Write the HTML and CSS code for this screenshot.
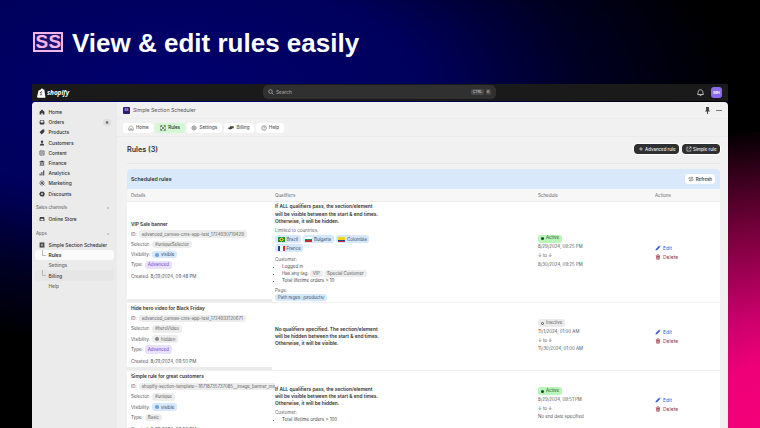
FILE: index.html
```html
<!DOCTYPE html>
<html lang="en">
<head>
  <meta charset="UTF-8">
  <title>View &amp; edit rules easily</title>
  <link rel="stylesheet" href="styles.css">
</head>
<body>
  <!-- icon sprite -->
  <svg width="0" height="0" class="defs">
    <symbol id="pencil" viewBox="0 0 12 12"><path d="M1 11l.6-3L8 1.600 10.400 4 4 10.400zM8.800.8l.6-.4 2.200 2.200-.4.6z" fill="currentColor"/></symbol>
    <symbol id="trash" viewBox="0 0 12 12"><path d="M4.500 1h3l.5 1h2.500v1.200h-9V2H4zM2.500 4h7l-.5 7H3zM4.600 5.200v4.600h.8V5.200zm2 0v4.600h.8V5.200z" fill="currentColor"/></symbol>
    <symbol id="i-home" viewBox="0 0 10 10"><path d="M5 1l4 3.500V9H6V6.500H4V9H1V4.500z" fill="currentColor"/></symbol>
    <symbol id="i-orders" viewBox="0 0 10 10"><path d="M2 1.500h6L9 4v3.500L8 9H2L1 7.500V4zM2.200 5.500h1.800l.5 1h1l.5-1h1.800L7.300 2.700H2.700z" fill="currentColor" fill-rule="evenodd"/></symbol>
    <symbol id="i-products" viewBox="0 0 10 10"><path d="M5.500 1H9v3.500L4.500 9 1 5.500z" fill="currentColor"/></symbol>
    <symbol id="i-customers" viewBox="0 0 10 10"><circle cx="5" cy="3" r="2" fill="currentColor"/><path d="M1.500 9c0-2.300 1.500-3.200 3.500-3.200S8.500 6.700 8.500 9z" fill="currentColor"/></symbol>
    <symbol id="i-content" viewBox="0 0 10 10"><path d="M1.500 1.500h7v7h-7zM2.500 3.500h5M2.500 5.500l2 1 1-1 2 1" fill="none" stroke="currentColor"/></symbol>
    <symbol id="i-finance" viewBox="0 0 10 10"><path d="M5 1l4 2v1H1V3zM1 8h8v1H1zM2 5h1.300v2.500H2zM4.300 5h1.400v2.500H4.300zM6.700 5H8v2.500H6.700z" fill="currentColor"/></symbol>
    <symbol id="i-analytics" viewBox="0 0 10 10"><path d="M1 6h1.700v3H1zM4 3.500h1.700V9H4zM7 1h1.700v8H7z" fill="currentColor"/></symbol>
    <symbol id="i-marketing" viewBox="0 0 10 10"><circle cx="5" cy="5" r="3.500" fill="none" stroke="currentColor"/><circle cx="5" cy="5" r="1.500" fill="currentColor"/><path d="M5 5l4 4" stroke="currentColor"/></symbol>
    <symbol id="i-discounts" viewBox="0 0 10 10"><path d="M5 .6l1.300 1 1.600-.2.400 1.500 1.400.9L9 5.300l.6 1.500-1.400.8-.4 1.500-1.600-.1L5 9.400 3.700 8.500 2.100 8.600l-.4-1.500L.4 6.300 1 5 .4 3.600l1.300-.8.4-1.500 1.600.2zM5 3.500a1.500 1.500 0 100 3 1.500 1.500 0 000-3z" fill="currentColor" fill-rule="evenodd"/></symbol>
    <symbol id="i-store" viewBox="0 0 10 10"><path d="M1.500 1.500h7L9 4v4.500H1V4zM2.500 4.500v3h5v-3z" fill="currentColor" fill-rule="evenodd"/></symbol>
    <symbol id="i-app" viewBox="0 0 10 10"><path d="M1 1h8v8H1zM3 3v1.500h1.500V3zm2.500 0v1.500H7V3zM3 5.500V7h1.500V5.500zm2.500 0V7H7V5.500z" fill="currentColor" fill-rule="evenodd"/></symbol>
    <symbol id="t-home" viewBox="0 0 10 10"><path d="M5 1.200l3.600 3.200v4.400H6V6.300H4v2.500H1.400V4.400z" fill="none" stroke="currentColor" stroke-width=".8"/></symbol>
    <symbol id="t-rules" viewBox="0 0 10 10"><path d="M1.500 1.500l7 7M8.500 1.500l-7 7M1 4V1h3M6 9h3V6M1 6v3h3M9 4V1H6" fill="none" stroke="currentColor"/></symbol>
    <symbol id="t-settings" viewBox="0 0 10 10"><circle cx="5" cy="5" r="1.400" fill="none" stroke="currentColor" stroke-width=".8"/><circle cx="5" cy="5" r="3.200" fill="none" stroke="currentColor" stroke-width=".8"/><path d="M5 .6v1M5 8.400v1M.6 5h1M8.400 5h1M1.900 1.900l.7.7M7.400 7.400l.7.7M8.100 1.900l-.7.7M2.600 7.400l-.7.7" stroke="currentColor" stroke-width=".8"/></symbol>
    <symbol id="t-billing" viewBox="0 0 10 10"><path d="M3 2h6.500v3.500H3zM.5 4H7v2.500H4V8H2.500V6.500H.5z" fill="currentColor"/></symbol>
    <symbol id="t-help" viewBox="0 0 10 10"><circle cx="5" cy="5" r="3.900" fill="none" stroke="currentColor" stroke-width=".8"/><path d="M3.800 4c.1-1.500 2.500-1.400 2.500 0 0 1-1.300 1-1.300 2M5 6.800v.8" fill="none" stroke="currentColor" stroke-width=".8"/></symbol>
    <symbol id="b-plus" viewBox="0 0 10 10"><path d="M5 2v6M2 5h6" fill="none" stroke="currentColor" stroke-width="1.100"/></symbol>
    <symbol id="b-ext" viewBox="0 0 10 10"><path d="M4 2H1.500v6.500H8V6M5.500 1.500h3v3M8.500 1.500L4.500 5.500" fill="none" stroke="currentColor"/></symbol>
    <symbol id="b-refresh" viewBox="0 0 10 10"><path d="M1.500 4.500V3h6M6 1.300L7.700 3 6 4.700M8.500 5.500V7h-6M4 5.300L2.300 7 4 8.700" fill="none" stroke="currentColor" stroke-width=".9"/></symbol>
  </svg>

  <div class="headline">
    <div class="logo"><span>S</span><span>S</span></div>
    <h1>View &amp; edit rules easily</h1>
  </div>

  <div class="window">
    <div class="topbar">
      <div class="brand">
        <svg width="9" height="10" viewBox="0 0 9 10"><path d="M1.500 2.500L3.500 1.800C4 .4 5.500 .2 6 1.400L7.300 1.500 8.500 9.800 1 9.800 0 9z" fill="#fff"/><path d="M5 3.800c-1.500-.4-2.200 1-.8 1.700 1 .6.500 1.900-1 1.300" stroke="#1a1a1a" stroke-width=".8" fill="none"/></svg>
        <span>shopify</span>
      </div>
      <div class="search">
        <svg width="6" height="6" viewBox="0 0 6 6"><circle cx="2.500" cy="2.500" r="1.800" fill="none" stroke="#bbb" stroke-width=".7"/><path d="M4 4l1.500 1.500" stroke="#bbb" stroke-width=".7"/></svg>
        <span class="search-text">Search</span>
        <span class="kbd">CTRL</span><span class="kbd">K</span>
      </div>
      <div class="top-right">
        <svg width="7" height="8" viewBox="0 0 7 8"><path d="M3.500.8c-1.500 0-2.300 1-2.300 2.400 0 1.300-.7 1.800-.7 2.300h6c0-.5-.7-1-.7-2.300C5.800 1.800 5 .8 3.500.8z" fill="none" stroke="#ddd" stroke-width=".8"/><path d="M2.700 6.600h1.600" stroke="#ddd" stroke-width=".8"/></svg>
        <div class="avatar">MH</div>
      </div>
    </div>

    <div class="panes">
      <nav class="sidebar">
        <a class="nav-item"><svg class="ico"><use href="#i-home"/></svg>Home</a>
        <a class="nav-item"><svg class="ico"><use href="#i-orders"/></svg>Orders<b class="count">6</b></a>
        <a class="nav-item"><svg class="ico"><use href="#i-products"/></svg>Products</a>
        <a class="nav-item"><svg class="ico"><use href="#i-customers"/></svg>Customers</a>
        <a class="nav-item"><svg class="ico"><use href="#i-content"/></svg>Content</a>
        <a class="nav-item"><svg class="ico"><use href="#i-finance"/></svg>Finance</a>
        <a class="nav-item"><svg class="ico"><use href="#i-analytics"/></svg>Analytics</a>
        <a class="nav-item"><svg class="ico"><use href="#i-marketing"/></svg>Marketing</a>
        <a class="nav-item"><svg class="ico"><use href="#i-discounts"/></svg>Discounts</a>
        <div class="nav-head">Sales channels<span>›</span></div>
        <a class="nav-item"><svg class="ico"><use href="#i-store"/></svg>Online Store</a>
        <div class="nav-head apps">Apps<span>›</span></div>
        <a class="nav-item"><svg class="ico"><use href="#i-app"/></svg>Simple Section Scheduler</a>
        <a class="nav-sub active">Rules</a>
        <a class="nav-sub">Settings</a>
        <a class="nav-sub hover">Billing</a>
        <a class="nav-sub">Help</a>
      </nav>

      <main class="content">
        <div class="app-title">
          <div class="app-icon">SS</div>
          <span>Simple Section Scheduler</span>
          <div class="app-actions">
            <svg width="5" height="7" viewBox="0 0 5 7"><path d="M1 0h3v3l1 1.500H3V7H2V4.500H0L1 3z" fill="#444"/></svg>
            <i class="dots"></i>
          </div>
        </div>
        <div class="tabs">
          <a class="tab"><svg class="tab-ico"><use href="#t-home"/></svg>Home</a>
          <a class="tab current"><svg class="tab-ico"><use href="#t-rules"/></svg>Rules</a>
          <a class="tab"><svg class="tab-ico"><use href="#t-settings"/></svg>Settings</a>
          <a class="tab"><svg class="tab-ico"><use href="#t-billing"/></svg>Billing</a>
          <a class="tab"><svg class="tab-ico"><use href="#t-help"/></svg>Help</a>
        </div>
        <div class="page-head">
          <h2>Rules (3)</h2>
          <div class="page-buttons">
            <a class="dark-btn"><svg class="btn-ico"><use href="#b-plus"/></svg>Advanced rule</a>
            <a class="dark-btn"><svg class="btn-ico"><use href="#b-ext"/></svg>Simple rule</a>
          </div>
        </div>

        <section class="card">
          <div class="card-head">
            <span>Scheduled rules</span>
            <a class="refresh"><svg class="btn-ico"><use href="#b-refresh"/></svg>Refresh</a>
          </div>
          <div class="row head-row">
            <div>Details</div><div>Qualifiers</div><div>Schedule</div><div>Actions</div>
          </div>

          <div class="row rule rule-1">
            <div class="details">
              <div class="rule-name">VIP Sale banner</div>
              <div class="field">ID: <span class="tag">advanced_canvas-cms-app-test_1724930719429</span></div>
              <div class="field">Selector: <span class="tag">#uniqueSelector</span></div>
              <div class="field">Visibility: <span class="tag blue"><i class="dot-blue"></i>visible</span></div>
              <div class="field">Type: <span class="tag purple">Advanced</span></div>
              <div class="created">Created: 8/29/2024, 09:48 PM</div>
              <div class="hbar"></div>
            </div>
            <div class="qualifiers">
              <p class="strong">If ALL qualifiers pass, the section/element<br>will be visible between the start &amp; end times.<br>Otherwise, it will be hidden.</p>
              <div class="sub-label">Limited to countries:</div>
              <div class="flags">
                <span class="tag blue"><i class="flag br"></i>Brazil</span>
                <span class="tag blue"><i class="flag bg"></i>Bulgaria</span>
                <span class="tag blue"><i class="flag co"></i>Colombia</span>
                <span class="tag blue"><i class="flag fr"></i>France</span>
              </div>
              <div class="sub-label">Customer:</div>
              <ul>
                <li>Logged in</li>
                <li>Has any tag: <span class="tag">VIP</span> <span class="tag">Special Customer</span></li>
                <li>Total lifetime orders &gt; 10</li>
              </ul>
              <div class="sub-label">Page:</div>
              <span class="tag blue">Path regex: /products/</span>
            </div>
            <div class="schedule">
              <span class="status on"><i></i>Active</span>
              <div>8/29/2024, 09:25 PM</div>
              <div>↓ to ↓</div>
              <div>8/30/2024, 09:25 PM</div>
            </div>
            <div class="actions">
              <a class="edit"><svg><use href="#pencil"/></svg>Edit</a>
              <a class="delete"><svg><use href="#trash"/></svg>Delete</a>
            </div>
          </div>

          <div class="row rule rule-2">
            <div class="details">
              <div class="rule-name">Hide hero video for Black Friday</div>
              <div class="field">ID: <span class="tag">advanced_canvas-cms-app-test_1724932120671</span></div>
              <div class="field">Selector: <span class="tag">#heroVideo</span></div>
              <div class="field">Visibility: <span class="tag"><i class="dot-grey"></i>hidden</span></div>
              <div class="field">Type: <span class="tag purple">Advanced</span></div>
              <div class="created">Created: 8/29/2024, 09:50 PM</div>
              <div class="hbar"></div>
            </div>
            <div class="qualifiers">
              <p class="strong">No qualifiers specified. The section/element<br>will be hidden between the start &amp; end times.<br>Otherwise, it will be visible.</p>
            </div>
            <div class="schedule">
              <span class="status off"><i></i>Inactive</span>
              <div>11/1/2024, 01:00 AM</div>
              <div>↓ to ↓</div>
              <div>11/30/2024, 01:00 AM</div>
            </div>
            <div class="actions">
              <a class="edit"><svg><use href="#pencil"/></svg>Edit</a>
              <a class="delete"><svg><use href="#trash"/></svg>Delete</a>
            </div>
          </div>

          <div class="row rule rule-3">
            <div class="details">
              <div class="rule-name">Simple rule for great customers</div>
              <div class="field">ID: <span class="tag">shopify-section-template--16718735737085__image_banner_mx</span></div>
              <div class="field">Selector: <span class="tag">#unique</span></div>
              <div class="field">Visibility: <span class="tag blue"><i class="dot-blue"></i>visible</span></div>
              <div class="field">Type: <span class="tag">Basic</span></div>
              <div class="created">Created: 8/29/2024, 09:50 PM</div>
            </div>
            <div class="qualifiers">
              <p class="strong">If ALL qualifiers pass, the section/element<br>will be visible between the start &amp; end times.<br>Otherwise, it will be hidden.</p>
              <div class="sub-label">Customer:</div>
              <ul><li>Total lifetime orders &gt; 100</li></ul>
            </div>
            <div class="schedule">
              <span class="status on"><i></i>Active</span>
              <div>8/29/2024, 09:51 PM</div>
              <div>↓ to ↓</div>
              <div>No end date specified</div>
            </div>
            <div class="actions">
              <a class="edit"><svg><use href="#pencil"/></svg>Edit</a>
              <a class="delete"><svg><use href="#trash"/></svg>Delete</a>
            </div>
          </div>
        </section>
      </main>
    </div>
  </div>
</body>
</html>
```

FILE: styles.css
```css
html, body {
  height: 428px;
}

body {
  margin: 0;
  overflow: hidden;
  font-family: Inter, 'Liberation Sans', sans-serif;
  color: #303030;
  background-color: #000;
  background-image:
    radial-gradient(ellipse 280px 300px at 770px 428px, #f5007a 0%, #ee0078 22%, #c8006a 38%, #700038 68%, rgba(40, 0, 30, 0) 100%),
    radial-gradient(ellipse 560px 260px at 170px 90px, #00006e 0%, #00005c 45%, rgba(0, 0, 46, 0.7) 75%, rgba(0, 0, 20, 0) 100%);
}

.defs {
  position: absolute;
}

a {
  color: inherit;
}

.headline {
  display: flex;
  align-items: center;
  gap: 9px;
  height: 84px;
  padding-left: 33px;
  box-sizing: border-box;
}

.logo {
  display: flex;
  width: 30px;
  height: 20px;
  box-sizing: border-box;
  border: 2px solid #f4b6e6;
  background-color: #1a1470;
  justify-content: center;
  gap: 1px;
}

.logo span {
  font: bold 19px/16px 'Liberation Sans', sans-serif;
  color: #f4b6e6;
  width: 12px;
  text-align: center;
}

h1 {
  margin: 2px 0 0;
  font: bold 26px 'Liberation Sans', sans-serif;
  color: #fff;
}

.window {
  width: 696px;
  height: 344px;
  margin-left: 32px;
  overflow: hidden;
}

.topbar {
  display: flex;
  align-items: center;
  height: 17px;
  background-color: #1a1a1a;
  position: relative;
}

.brand {
  display: flex;
  align-items: center;
  gap: 1px;
  margin-left: 5px;
  color: #fff;
  font: italic bold 6.400px 'Open Sans', sans-serif;
}

.search {
  position: absolute;
  left: 231px;
  width: 233px;
  height: 14px;
  top: 1px;
  display: flex;
  align-items: center;
  gap: 2px;
  padding: 0 5px;
  box-sizing: border-box;
  background-color: #303030;
  border-radius: 5px;
  color: #aaa;
  font-size: 4.800px;
}

.search-text {
  flex: 1;
}

.kbd {
  background-color: #4a4a4a;
  border-radius: 2px;
  padding: 1px 1.500px;
  font-size: 3.600px;
  color: #ddd;
}

.top-right {
  margin-left: auto;
  display: flex;
  align-items: center;
  gap: 7px;
  margin-right: 6px;
}

.avatar {
  width: 11px;
  height: 11px;
  border-radius: 3px;
  background-color: #8b6cf0;
  color: #fff;
  font-size: 4px;
  font-weight: 600;
  line-height: 11px;
  text-align: center;
}

.panes {
  display: flex;
  margin-top: 1px;
  height: 326px;
  background-color: #f1f1f1;
  border-radius: 4px 4px 0 0;
  overflow: hidden;
}

.sidebar {
  width: 85px;
  flex: none;
  background-color: #ebebeb;
  padding: 5px 3px 0;
  box-sizing: border-box;
}

.nav-item, .nav-sub {
  display: flex;
  align-items: center;
  height: 10.200px;
  font-size: 4.800px;
  font-weight: 500;
  color: #303030;
  border-radius: 3px;
  white-space: nowrap;
  position: relative;
}

.ico {
  width: 6px;
  height: 6px;
  margin: 0 4px 0 3.500px;
  color: #3a3a3a;
  flex: none;
}

.count {
  margin-left: auto;
  margin-right: 3px;
  width: 8px;
  height: 7px;
  border-radius: 3px;
  background-color: #dedede;
  text-align: center;
  font-size: 4px;
  line-height: 7px;
  font-weight: 500;
}

.nav-head {
  display: flex;
  justify-content: space-between;
  padding: 0 5px 0 1px;
  margin-top: 4px;
  height: 11px;
  line-height: 10px;
  font-size: 4.400px;
  color: #555;
}

.nav-head.apps {
  margin-top: 5px;
}

.nav-sub {
  padding-left: 13.500px;
  color: #6b6b6b;
}

.nav-sub.active {
  background-color: #fafafa;
  color: #303030;
  font-weight: 600;
}

.nav-sub.hover {
  background-color: #e6e6e6;
  color: #444;
}

/* tree elbow in front of the selected sub items */
.nav-sub.active::before,
.nav-sub.hover::before {
  content: "";
  position: absolute;
  left: 7px;
  top: 0;
  width: 3px;
  height: 5px;
  border-left: 0.500px solid #bbb;
  border-bottom: 0.500px solid #bbb;
}

.content {
  flex: 1;
  min-width: 0;
  padding: 0 8px 0 10px;
}

.app-title {
  display: flex;
  align-items: center;
  gap: 3px;
  height: 16px;
  margin: 0 -8px 0 -10px;
  padding: 0 6px 0 6px;
  font-size: 5.200px;
  color: #555;
  border-bottom: 1px solid #ebebeb;
}

.app-icon {
  width: 7px;
  height: 7px;
  border-radius: 1px;
  background-color: #2a1a70;
  color: #d8c0f0;
  font-size: 3px;
  line-height: 7px;
  text-align: center;
  font-weight: 700;
}

.app-actions {
  margin-left: auto;
  display: flex;
  align-items: center;
  gap: 6px;
}

.dots {
  width: 6px;
  height: 1px;
  background-color: #777;
}

.tabs {
  display: flex;
  gap: 2px;
  height: 17px;
  align-items: center;
  margin: 0 -8px 0 -10px;
  padding-left: 6px;
  border-bottom: 1px solid #ebebeb;
}

.tab {
  display: flex;
  align-items: center;
  gap: 2.500px;
  height: 10px;
  padding: 0 4.500px;
  background-color: #fff;
  border-radius: 3px;
  font-size: 4.500px;
  font-weight: 500;
  color: #555;
}

.tab.current {
  background-color: #d4f8d4;
  color: #303030;
}

.tab-ico {
  width: 6px;
  height: 6px;
  color: #444;
}

.page-head {
  display: flex;
  align-items: center;
  justify-content: space-between;
  height: 24px;
  padding-bottom: 2px;
  border-bottom: 1px solid #e6e6e6;
}

h2 {
  margin: 0;
  font-size: 7.200px;
  font-weight: 600;
  color: #303030;
}

.page-buttons {
  display: flex;
  gap: 3px;
}

.dark-btn {
  display: flex;
  align-items: center;
  gap: 1.500px;
  background-color: #303030;
  outline: 0.500px solid #fff;
  color: #eee;
  font-size: 4.400px;
  font-weight: 500;
  height: 10px;
  padding: 0 3.500px;
  border-radius: 3px;
}

.btn-ico {
  width: 6px;
  height: 6px;
}

.card {
  margin-top: 5px;
  background-color: #fff;
  border-radius: 4px 4px 0 0;
  overflow: hidden;
}

.card-head {
  display: flex;
  align-items: center;
  justify-content: space-between;
  height: 20px;
  padding: 0 5px 0 4px;
  background-color: #d9e8fb;
  font-size: 5.200px;
  font-weight: 600;
}

.refresh {
  display: flex;
  align-items: center;
  gap: 1.500px;
  background-color: #fff;
  border-radius: 3px;
  height: 10px;
  padding: 0 3px;
  font-size: 4.400px;
  font-weight: 500;
}

.row {
  display: grid;
  grid-template-columns: 144px 263px 117px 1fr;
  font-size: 4.500px;
  padding-left: 4px;
  box-sizing: border-box;
}

.head-row {
  height: 13px;
  align-items: center;
  background-color: #f7f7f7;
  border-bottom: 1px solid #ececec;
  color: #666;
}

.rule {
  align-items: center;
  border-bottom: 1px solid #f0f0f0;
  color: #555;
  position: relative;
}

.rule-1 { height: 101px; }
.rule-2 { height: 68px; }
.rule-3 { height: 68px; }

.details {
  min-width: 0;
  overflow: hidden;
  padding-right: 1px;
  padding-bottom: 3px;
}

/* the horizontal scrollbar of the details cell */
.hbar {
  position: absolute;
  left: 0;
  bottom: 0;
  width: 145px;
  height: 3px;
  background-color: #ebebeb;
}

.rule-name {
  font-weight: 600;
  color: #303030;
  font-size: 4.800px;
  margin-bottom: 1.350px;
  line-height: 7px;
}

.field {
  display: flex;
  align-items: center;
  gap: 2px;
  height: 10.300px;
  white-space: nowrap;
}

.created {
  margin-top: 3.350px;
  line-height: 7px;
}

.tag {
  display: inline-flex;
  align-items: center;
  gap: 2px;
  height: 7px;
  padding: 0 3px;
  border-radius: 3px;
  background-color: #ededed;
  font-size: 4.400px;
  color: #616161;
  white-space: nowrap;
  font-weight: 400;
}

.field .tag {
  height: 7.500px;
}

.tag.blue {
  background-color: #d6e8fc;
  color: #3a4a60;
}

.tag.purple {
  background-color: #e9e0fc;
  color: #6b40d8;
}

.field .tag.purple {
  height: 8.500px;
}

.dot-blue, .dot-grey {
  width: 4px;
  height: 4px;
  border-radius: 50%;
  background-color: #6a9fe0;
}

.dot-grey {
  background-color: #888;
}

.qualifiers {
  line-height: 7px;
}

.qualifiers p {
  margin: 0;
}

.strong {
  font-size: 4.800px;
  line-height: 7.200px;
  font-weight: 600;
  color: #303030;
}

.sub-label {
  margin-top: 2.100px;
  color: #666;
}

.flags {
  display: flex;
  flex-wrap: wrap;
  gap: 0.700px 2px;
  width: 100px;
  margin-top: 1.200px;
  margin-bottom: 3.800px;
}

.flags .tag {
  height: 8px;
  padding: 0 2.500px;
}

.flags + .sub-label {
  margin-top: 0;
}

.flag {
  width: 7px;
  height: 5px;
  flex: none;
}

.flag.br { background: radial-gradient(circle, #2a4aa0 20%, #f0d020 25%, #f0d020 45%, #1a9040 50%); }
.flag.bg { background: linear-gradient(#fff 33%, #1a9060 33%, #1a9060 66%, #c03030 66%); }
.flag.co { background: linear-gradient(#f0d020 50%, #2040a0 50%, #2040a0 75%, #c03030 75%); }
.flag.fr { background: linear-gradient(90deg, #2040a0 33%, #fff 33%, #fff 66%, #d03040 66%); }

ul {
  margin: 0;
  padding-left: 7px;
}

li {
  line-height: 7.200px;
  height: 7.200px;
  color: #444;
}

.schedule {
  line-height: 8.600px;
  font-size: 4.400px;
}

.status {
  display: inline-flex;
  align-items: center;
  gap: 2px;
  height: 7.700px;
  padding: 0 3px;
  border-radius: 3px;
  font-size: 4.400px;
  vertical-align: top;
}

.status i {
  width: 3px;
  height: 3px;
  border-radius: 50%;
  box-sizing: border-box;
}

.status.on {
  background-color: #b8f5b8;
  color: #305030;
}

.status.on i {
  background-color: #0a5030;
}

.status.off {
  background-color: #ebebeb;
  color: #616161;
}

.status.off i {
  border: 0.700px solid #555;
}

.actions {
  display: flex;
  flex-direction: column;
  gap: 3px;
  font-size: 5px;
}

.actions a {
  display: flex;
  align-items: center;
  gap: 2px;
  height: 6px;
}

.actions svg {
  width: 6px;
  height: 6px;
}

.edit {
  color: #3a5fd8;
}

.delete {
  color: #a03040;
}
```
